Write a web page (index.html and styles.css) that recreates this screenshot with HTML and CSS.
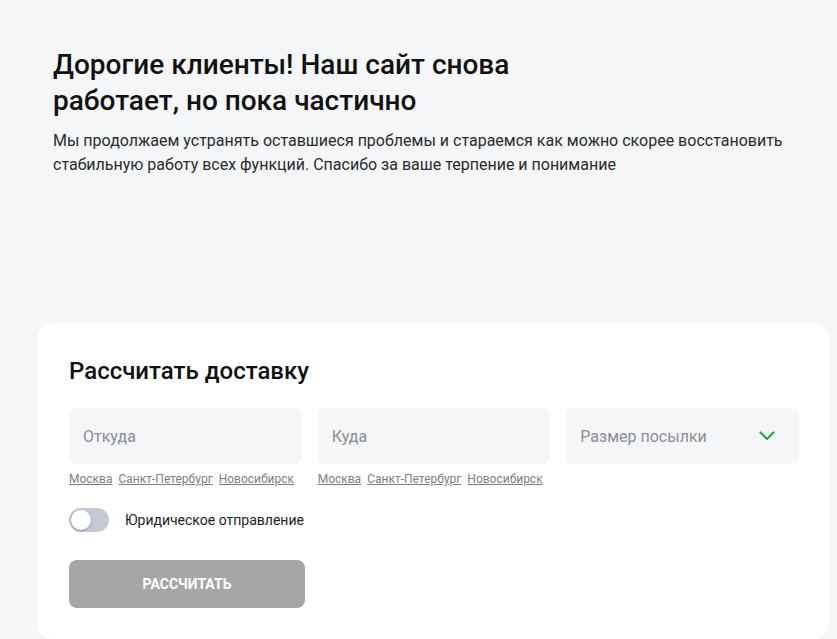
FILE: index.html
```html
<!DOCTYPE html>
<html lang="ru">
<head>
    <meta charset="UTF-8">
    <title>Рассчитать доставку</title>
    <link rel="stylesheet" href="styles.css">
</head>
<body>
    <section class="notice">
        <h1>Дорогие клиенты! Наш сайт снова<br>работает, но пока частично</h1>
        <p class="notice-text">Мы продолжаем устранять оставшиеся проблемы и стараемся как можно скорее восстановить стабильную работу всех функций. Спасибо за ваше терпение и понимание</p>
    </section>

    <section class="calc">
        <h2>Рассчитать доставку</h2>

        <div class="calc-fields">
            <div class="field">
                <input type="text" class="field-input" placeholder="Откуда">
                <div class="quick-links">
                    <a href="#">Москва</a>
                    <a href="#">Санкт-Петербург</a>
                    <a href="#">Новосибирск</a>
                </div>
            </div>
            <div class="field">
                <input type="text" class="field-input" placeholder="Куда">
                <div class="quick-links">
                    <a href="#">Москва</a>
                    <a href="#">Санкт-Петербург</a>
                    <a href="#">Новосибирск</a>
                </div>
            </div>
            <div class="field">
                <div class="field-select">
                    <span>Размер посылки</span>
                    <svg class="chevron" width="16" height="10" viewBox="0 0 16 10">
                        <path d="M1.5 1.5 L8 8 L14.5 1.5" fill="none" stroke="#21a94f" stroke-width="2.2" stroke-linecap="round" stroke-linejoin="round"/>
                    </svg>
                </div>
            </div>
        </div>

        <label class="switch-row">
            <span class="switch"><span class="switch-knob"></span></span>
            <span class="switch-label">Юридическое отправление</span>
        </label>

        <button class="calc-btn" disabled>Рассчитать</button>
    </section>
</body>
</html>
```

FILE: styles.css
```css
body {
    font-family: Roboto, 'Liberation Sans', sans-serif;
    margin: 0;
    padding: 0;
    background-color: #f5f6f8;
    color: #111;
}
.notice {
    padding: 47px 53px 0;
    height: 323px;
    box-sizing: border-box;
}
h1 {
    margin: 0;
    font-size: 28px;
    line-height: 36px;
    font-weight: 500;
    color: #111;
}
.notice-text {
    margin: 10px 0 0;
    font-size: 16px;
    line-height: 24px;
    color: #2b2b2b;
}
.calc {
    margin-left: 37px;
    width: 792px;
    box-sizing: border-box;
    background: #ffffff;
    border-radius: 16px;
    padding: 32px 30px 31px 32px;
}
h2 {
    margin: 0;
    font-size: 24px;
    line-height: 32px;
    font-weight: 500;
    color: #111;
}
.calc-fields {
    display: grid;
    grid-template-columns: repeat(3, 1fr);
    gap: 16px;
    margin-top: 21px;
}
.field-input, .field-select {
    display: block;
    width: 100%;
    height: 56px;
    box-sizing: border-box;
    border: none;
    border-radius: 8px;
    background: #f5f6f8;
    padding: 0 14px;
    font-family: inherit;
    font-size: 16px;
    color: #111;
    outline: none;
}
.field-input::placeholder {
    color: #8a8e95;
}
.field-select {
    display: flex;
    align-items: center;
    justify-content: space-between;
    color: #8a8e95;
    padding-right: 24px;
}
.quick-links {
    display: flex;
    gap: 6px;
    margin-top: 7px;
    font-size: 12px;
    line-height: 16px;
}
.quick-links a {
    color: #7b7f85;
    text-decoration: underline;
}
.switch-row {
    display: flex;
    align-items: center;
    gap: 16px;
    margin-top: 21px;
    cursor: pointer;
}
.switch {
    position: relative;
    width: 40px;
    height: 24px;
    border-radius: 12px;
    background: #c3cad6;
}
.switch-knob {
    position: absolute;
    left: 2px;
    top: 2px;
    width: 20px;
    height: 20px;
    border-radius: 50%;
    background: #ffffff;
    box-shadow: 0 1px 3px rgba(0, 0, 0, 0.25);
}
.switch-label {
    font-size: 14px;
    color: #222;
}
.calc-btn {
    display: block;
    margin-top: 28px;
    width: 236px;
    height: 48px;
    border: none;
    border-radius: 8px;
    background: #a6a6a6;
    color: #ffffff;
    font-family: inherit;
    font-size: 14px;
    font-weight: 700;
    text-transform: uppercase;
}
```
